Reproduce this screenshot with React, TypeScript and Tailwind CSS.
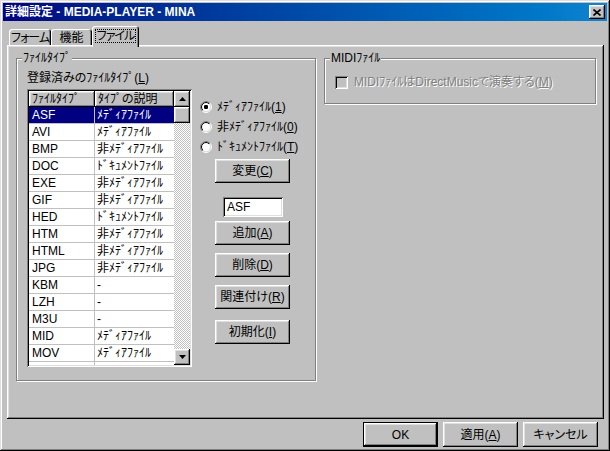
import React from "react";

const raised =
  "shadow-[inset_-1px_-1px_0_#000,inset_1px_1px_0_#fff,inset_-2px_-2px_0_#808080,inset_2px_2px_0_#dfdfdf]";
const sunken =
  "shadow-[inset_1px_1px_0_#808080,inset_-1px_-1px_0_#fff,inset_2px_2px_0_#000,inset_-2px_-2px_0_#dfdfdf]";
const etched = "border border-[#808080] shadow-[inset_1px_1px_0_#fff,1px_1px_0_#fff]";

function U({ c }: { c: string }) {
  return <span className="underline underline-offset-[1px]">{c}</span>;
}

function Btn({ children, className = "" }: { children: React.ReactNode; className?: string }) {
  return (
    <div className={`flex items-center justify-center whitespace-nowrap w-[75px] h-[24px] bg-[#c0c0c0] ${raised} ${className}`}>
      {children}
    </div>
  );
}

function Radio({ checked }: { checked?: boolean }) {
  return (
    <svg width="12" height="12" viewBox="0 0 12 12" className="shrink-0">
      <defs>
        <linearGradient id="ro" x1="0" y1="0" x2="1" y2="1">
          <stop offset="0.5" stopColor="#808080" />
          <stop offset="0.5" stopColor="#ffffff" />
        </linearGradient>
        <linearGradient id="ri" x1="0" y1="0" x2="1" y2="1">
          <stop offset="0.5" stopColor="#000000" />
          <stop offset="0.5" stopColor="#dfdfdf" />
        </linearGradient>
      </defs>
      <circle cx="6" cy="6" r="5.5" fill="none" stroke="url(#ro)" strokeWidth="1" />
      <circle cx="6" cy="6" r="4.5" fill="#fff" stroke="url(#ri)" strokeWidth="1" />
      {checked && <rect x="4" y="4" width="4" height="4" rx="1.2" fill="#000" />}
    </svg>
  );
}

function Arrow({ up }: { up?: boolean }) {
  return (
    <svg width="7" height="4" viewBox="0 0 7 4">
      {up ? <polygon points="3.5,0 7,4 0,4" fill="#000" /> : <polygon points="0,0 7,0 3.5,4" fill="#000" />}
    </svg>
  );
}

const rows: [string, string][] = [
  ["ASF", "ﾒﾃﾞｨｱﾌｧｲﾙ"],
  ["AVI", "ﾒﾃﾞｨｱﾌｧｲﾙ"],
  ["BMP", "非ﾒﾃﾞｨｱﾌｧｲﾙ"],
  ["DOC", "ﾄﾞｷｭﾒﾝﾄﾌｧｲﾙ"],
  ["EXE", "非ﾒﾃﾞｨｱﾌｧｲﾙ"],
  ["GIF", "非ﾒﾃﾞｨｱﾌｧｲﾙ"],
  ["HED", "ﾄﾞｷｭﾒﾝﾄﾌｧｲﾙ"],
  ["HTM", "非ﾒﾃﾞｨｱﾌｧｲﾙ"],
  ["HTML", "非ﾒﾃﾞｨｱﾌｧｲﾙ"],
  ["JPG", "非ﾒﾃﾞｨｱﾌｧｲﾙ"],
  ["KBM", "-"],
  ["LZH", "-"],
  ["M3U", "-"],
  ["MID", "ﾒﾃﾞｨｱﾌｧｲﾙ"],
  ["MOV", "ﾒﾃﾞｨｱﾌｧｲﾙ"],
  ["", ""],
];

const tabShadow = "shadow-[inset_1px_1px_0_#fff,inset_-1px_0_0_#000,inset_-2px_0_0_#808080]";

export default function App() {
  return (
    <div
      className={`w-[610px] h-[451px] bg-[#c0c0c0] p-[3px] flex flex-col text-[12px] leading-[14px] text-black font-['Liberation_Sans','Noto_Sans_CJK_JP',sans-serif] [font-feature-settings:'palt'] select-none overflow-hidden shadow-[inset_-1px_-1px_0_#000,inset_1px_1px_0_#dfdfdf,inset_-2px_-2px_0_#808080,inset_2px_2px_0_#fff]`}
    >
      {/* Title bar */}
      <div className="h-[18px] flex items-center justify-between bg-gradient-to-r from-[#000080] to-[#1084d0] pl-[2px] pr-[2px]">
        <span className="text-white font-bold text-[12px] leading-[14px] whitespace-pre">詳細設定 - MEDIA-PLAYER - MINA</span>
        <div className={`w-[16px] h-[14px] bg-[#c0c0c0] flex items-center justify-center ${raised}`}>
          <svg width="8" height="7" viewBox="0 0 8 7">
            <path d="M0.5 0.5 L7.5 6.5 M7.5 0.5 L0.5 6.5" stroke="#000" strokeWidth="1.6" />
          </svg>
        </div>
      </div>

      {/* Tabs */}
      <div className="h-[24px] flex items-end pl-[6px] relative z-10">
        <div className={`w-[42px] h-[16px] rounded-t-[3px] flex items-center justify-center pt-[1px] whitespace-nowrap tracking-[-1px] ${tabShadow}`}>
          フォーム
        </div>
        <div className={`w-[41px] h-[16px] rounded-t-[3px] flex items-center justify-center pt-[1px] whitespace-nowrap ${tabShadow}`}>
          機能
        </div>
        <div className={`w-[47px] h-[21px] -mb-[2px] bg-[#c0c0c0] rounded-t-[3px] flex justify-center pt-[3px] ${tabShadow}`}>
          <div className="h-[14px] px-[1px] border border-dotted border-black leading-[12px] flex items-center whitespace-nowrap tracking-[-1px]">
            ファイル
          </div>
        </div>
      </div>

      {/* Panel */}
      <div className={`ml-[4px] w-[597px] h-[374px] flex gap-[8px] pl-[9px] pt-[13px] ${raised}`}>
        {/* Group box 1 */}
        <div className={`relative w-[300px] h-[323px] pl-[10px] pt-[12px] ${etched}`}>
          <div className="absolute left-[5px] -top-[8px] px-[1px] bg-[#c0c0c0] whitespace-nowrap">ﾌｧｲﾙﾀｲﾌﾟ</div>
          <div className="h-[14px] whitespace-nowrap">
            登録済みのﾌｧｲﾙﾀｲﾌﾟ(<U c="L" />)
          </div>
          <div className="flex mt-[4px]">
            {/* List view */}
            <div className={`w-[165px] h-[278px] bg-white p-[2px] flex ${sunken}`}>
              <div className="w-[145px] flex flex-col overflow-hidden">
                <div className="flex h-[16px] shrink-0">
                  <div className={`w-[66px] h-[16px] bg-[#c0c0c0] pl-[3px] flex items-center whitespace-nowrap ${raised}`}>ﾌｧｲﾙﾀｲﾌﾟ</div>
                  <div className={`w-[79px] h-[16px] bg-[#c0c0c0] pl-[3px] flex items-center whitespace-nowrap ${raised}`}>ﾀｲﾌﾟの説明</div>
                </div>
                {rows.map(([ext, desc], i) => (
                  <div
                    key={i}
                    className={`flex h-[17px] shrink-0 border-b border-[#c0c0c0] ${i === 0 ? "bg-[#000080] text-white" : ""}`}
                  >
                    <div className="w-[66px] pl-[3px] flex items-center border-r border-[#c0c0c0]">{ext}</div>
                    <div className="w-[79px] pl-[2px] flex items-center whitespace-nowrap">{desc}</div>
                  </div>
                ))}
              </div>
              {/* Scrollbar */}
              <div className="w-[16px] flex flex-col">
                <div className={`h-[16px] bg-[#c0c0c0] flex items-center justify-center ${raised}`}>
                  <Arrow up />
                </div>
                <div className={`h-[16px] bg-[#c0c0c0] ${raised}`} />
                <div className="flex-1 bg-[repeating-conic-gradient(#c0c0c0_0_25%,#ffffff_0_50%)] bg-[length:2px_2px]" />
                <div className={`h-[16px] bg-[#c0c0c0] flex items-center justify-center ${raised}`}>
                  <Arrow />
                </div>
              </div>
            </div>

            {/* Right controls */}
            <div className="ml-[8px] pt-[8px] flex flex-col">
              <div className="h-[20px] flex items-center gap-[5px] whitespace-nowrap">
                <Radio checked />
                <span>
                  ﾒﾃﾞｨｱﾌｧｲﾙ(<U c="1" />)
                </span>
              </div>
              <div className="h-[20px] flex items-center gap-[5px] whitespace-nowrap">
                <Radio />
                <span>
                  非ﾒﾃﾞｨｱﾌｧｲﾙ(<U c="0" />)
                </span>
              </div>
              <div className="h-[20px] flex items-center gap-[5px] whitespace-nowrap">
                <Radio />
                <span>
                  ﾄﾞｷｭﾒﾝﾄﾌｧｲﾙ(<U c="T" />)
                </span>
              </div>
              <Btn className="ml-[15px] mt-[2px]">
                変更(<U c="C" />)
              </Btn>
              <div className={`ml-[23px] mt-[14px] w-[60px] h-[20px] bg-white pl-[4px] flex items-center ${sunken}`}>ASF</div>
              <Btn className="ml-[15px] mt-[4px]">
                追加(<U c="A" />)
              </Btn>
              <Btn className="ml-[15px] mt-[8px]">
                削除(<U c="D" />)
              </Btn>
              <Btn className="ml-[15px] mt-[8px]">
                関連付け(<U c="R" />)
              </Btn>
              <Btn className="ml-[15px] mt-[11px]">
                初期化(<U c="I" />)
              </Btn>
            </div>
          </div>
        </div>

        {/* Group box 2 */}
        <div className={`relative w-[272px] h-[46px] pl-[10px] pt-[16px] ${etched}`}>
          <div className="absolute left-[5px] -top-[8px] px-[1px] bg-[#c0c0c0] whitespace-nowrap">MIDIﾌｧｲﾙ</div>
          <div className="flex items-center">
            <div className={`w-[13px] h-[13px] bg-[#c0c0c0] shrink-0 ${sunken}`} />
            <span className="ml-[6px] text-[#808080] [text-shadow:1px_1px_0_#fff] whitespace-nowrap">
              MIDIﾌｧｲﾙはDirectMusicで演奏する(<U c="M" />)
            </span>
          </div>
        </div>
      </div>

      {/* Bottom buttons */}
      <div className="mt-[3px] flex justify-end gap-[5px] pr-[9px]">
        <div className="w-[75px] h-[25px] border border-black">
          <div className={`w-full h-full flex items-center justify-center bg-[#c0c0c0] ${raised}`}>OK</div>
        </div>
        <div className={`w-[75px] h-[25px] flex items-center justify-center bg-[#c0c0c0] whitespace-nowrap ${raised}`}>
          適用(<U c="A" />)
        </div>
        <div className={`w-[75px] h-[25px] flex items-center justify-center bg-[#c0c0c0] whitespace-nowrap ${raised}`}>キャンセル</div>
      </div>
    </div>
  );
}
